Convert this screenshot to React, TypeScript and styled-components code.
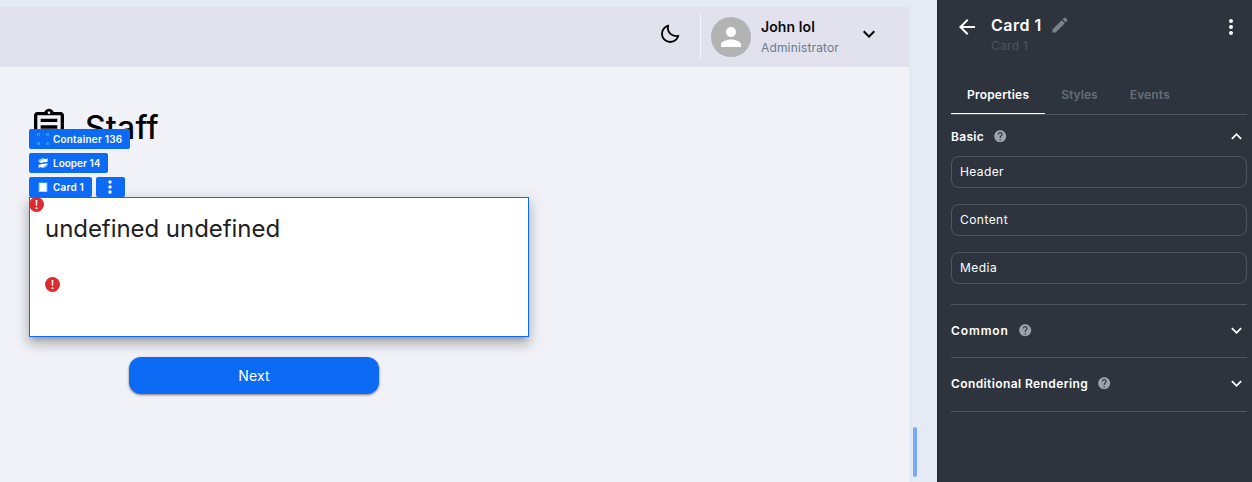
import React from "react";
import styled, { createGlobalStyle } from "styled-components";
import { BiMoon } from "react-icons/bi";
import {
  MdArrowBack,
  MdEdit,
  MdExpandLess,
  MdExpandMore,
  MdHelp,
  MdMoreVert,
  MdOutlineAssignment,
  MdPerson,
} from "react-icons/md";

const GlobalStyle = createGlobalStyle`
  *, *::before, *::after { box-sizing: border-box; }
  html, body { margin: 0; height: 100%; overflow: hidden; }
  body { font-family: Inter, "Liberation Sans", sans-serif; background: #e4ebf4; }
  h1, h2, p { margin: 0; }
  button { font: inherit; border: 0; background: none; padding: 0; color: inherit; }
  svg { display: block; flex: none; }
`;

const Shell = styled.div`
  display: flex;
  width: 1252px;
  height: 482px;
  overflow: hidden;
`;

const Workspace = styled.main`
  width: 909px;
  padding-top: 7px;
  display: flex;
  flex-direction: column;
`;

const TopBar = styled.header`
  height: 60px;
  flex: none;
  background: #e1e2ed;
  display: flex;
  align-items: center;
  justify-content: flex-end;
  padding-right: 28px;
`;

const ThemeToggle = styled.button`
  margin: -6px 19px 0 0;
`;

const User = styled.div`
  display: flex;
  align-items: center;
  height: 46px;
  border-left: 1px solid #f4f5fa;
  padding-left: 10px;
`;

const Avatar = styled.div`
  width: 40px;
  height: 40px;
  border-radius: 50%;
  background: #b3b3b3;
  color: #fff;
  display: grid;
  place-items: center;
`;

const UserText = styled.div`
  width: 96px;
  margin-left: 10px;
`;

const UserName = styled.p`
  font-size: 14px;
  font-weight: 600;
  line-height: 20px;
  letter-spacing: 0.1px;
  color: #0b0b0f;
  white-space: nowrap;
`;

const UserRole = styled.p`
  font-size: 12px;
  line-height: 22px;
  margin-bottom: -2px;
  letter-spacing: 0.15px;
  color: #6a7b8c;
`;

const UserCaret = styled.button`
  margin-top: -6px;
`;

const Page = styled.section`
  flex: 1;
  background: #f1f2f7;
  padding: 40px 29px 0;
`;

const Title = styled.h1`
  display: flex;
  align-items: center;
  gap: 16px;
  height: 40px;
  font-size: 32px;
  font-weight: 500;
  letter-spacing: 0.2px;
  color: #000;
`;

const Selected = styled.article`
  position: relative;
  margin-top: 50px;
  width: 500px;
  height: 140px;
  border: 1px solid #0d6af5;
  background: #fff;
  padding: 15px;
  box-shadow: 0 5px 5px -3px rgba(0, 0, 0, 0.2), 0 8px 10px 1px rgba(0, 0, 0, 0.14),
    0 3px 14px 2px rgba(0, 0, 0, 0.12);
`;

const CardTitle = styled.h2`
  font-size: 24px;
  font-weight: 400;
  line-height: 32px;
  letter-spacing: -0.05px;
  color: #212121;
  white-space: nowrap;
`;

const Alert = styled.span<{ $corner?: boolean }>`
  display: block;
  width: 15px;
  ${(p) => (p.$corner ? "position: absolute; left: -1px; top: -1px;" : "margin-top: 32px;")}
`;

const Tags = styled.div`
  position: absolute;
  left: -1px;
  bottom: 139px;
  display: flex;
  flex-direction: column;
  gap: 4px;
`;

const TagRow = styled.div`
  display: flex;
  gap: 4px;
`;

const Tag = styled.span<{ $w: number; $track?: number }>`
  width: ${(p) => p.$w}px;
  height: 20px;
  border-radius: 2px;
  background: #0d6af5;
  color: #fff;
  display: flex;
  align-items: center;
  gap: 4px;
  padding-left: 8px;
  font-size: 10px;
  font-weight: 600;
  letter-spacing: ${(p) => p.$track ?? 0}px;
  white-space: nowrap;
`;

const TagMenu = styled.button`
  width: 29px;
  height: 20px;
  border-radius: 2px;
  background: #0d6af5;
  color: #fff;
  display: grid;
  place-items: center;
  padding-right: 1px;
`;

const NextButton = styled.button`
  display: block;
  width: 250px;
  height: 37px;
  margin: 20px 0 0 100px;
  border-radius: 12px;
  background: #0d6af5;
  color: #fff;
  font-size: 14px;
  letter-spacing: 0.2px;
  box-shadow: 0 1px 3px rgba(0, 0, 0, 0.3), 0 1px 2px rgba(0, 0, 0, 0.25);
`;

const Gutter = styled.div`
  width: 28px;
  padding: 427px 0 0 4px;
`;

const ScrollThumb = styled.div`
  width: 4px;
  height: 50px;
  border-radius: 2px;
  background: #7aa9f3;
`;

const Panel = styled.aside`
  width: 315px;
  height: 482px;
  border-left: 2px solid #222a33;
  background: #2d343e;
  color: #fff;
  padding: 0 5px 0 12px;
`;

const PanelHead = styled.div`
  display: flex;
  height: 76px;
  padding: 15px 4px 0 4px;
`;

const PanelNames = styled.div`
  flex: 1;
  margin-left: 12px;
`;

const PanelTitle = styled.h2<{ $track: number }>`
  display: flex;
  align-items: center;
  gap: 8px;
  height: 19px;
  font-size: 16px;
  font-weight: 600;
  letter-spacing: ${(p) => p.$track}px;
  svg { color: #7c828a; }
`;

const PanelSub = styled.p`
  font-size: 12px;
  line-height: 16px;
  margin-top: 4px;
  letter-spacing: 0.3px;
  color: #4d545e;
`;

const Tabs = styled.nav`
  display: flex;
  height: 39px;
  border-bottom: 1px solid #50575f;
`;

const Tab = styled.button<{ $active?: boolean; $track: number }>`
  height: 38px;
  padding: 0 16px 2px;
  font-size: 12px;
  font-weight: 600;
  letter-spacing: ${(p) => p.$track}px;
  color: ${(p) => (p.$active ? "#fff" : "#676e77")};
  box-shadow: ${(p) => (p.$active ? "inset 0 -1px 0 #fff" : "none")};
`;

const SectionHead = styled.div<{ $h: number; $track: number; $top?: number; $bottom?: number }>`
  display: flex;
  align-items: center;
  height: ${(p) => p.$h}px;
  padding: ${(p) => p.$top ?? 0}px 0 ${(p) => p.$bottom ?? 0}px;
  font-size: 12px;
  font-weight: 600;
  letter-spacing: ${(p) => p.$track}px;
`;

const HelpIcon = styled(MdHelp)`
  margin: -1px auto 0 9px;
  color: #9ba4ae;
`;

const Slots = styled.div`
  display: flex;
  flex-direction: column;
  gap: 16px;
  padding: 0 0 20px;
`;

const Slot = styled.div<{ $track: number }>`
  height: 32px;
  border: 1px solid #50575f;
  border-radius: 8px;
  padding-left: 8px;
  font-size: 12px;
  line-height: 30px;
  letter-spacing: ${(p) => p.$track}px;
`;

const Section = styled.section`
  border-bottom: 1px solid #50575f;
`;

const AlertGlyph = () => (
  <svg width="15" height="15" viewBox="0 0 15 15">
    <circle cx="7.5" cy="7.5" r="7.5" fill="#dc2c2f" />
    <path d="M6.6 3h1.8l-.3 6H6.9zM6.6 10.2h1.8v1.7H6.6z" fill="#fff" />
  </svg>
);

const ContainerGlyph = () => (
  <svg width="12" height="12" viewBox="0 0 12 12" fill="#189cf4">
    <path d="M0 0h3v3H0zM9 0h3v3H9zM0 9h3v3H0zM9 9h3v3H9z" />
    <path d="M5 1h2v1H5zM5 10h2v1H5zM1 5h1v2H1zM10 5h1v2h-1z" opacity=".35" />
  </svg>
);

const LooperGlyph = () => (
  <svg width="12" height="12" viewBox="0 0 12 12">
    <path d="M1.5 4.6C2 1.5 6 .6 8.7 2.2L10.6 1.2V4.8L4 6.2z" fill="#fff" />
    <path d="M10.6 6.6C10.2 10.5 5.8 11.6 3.2 10L1.6 11V7.8L8 6.4z" fill="#fff" />
    <path d="M1.3 5C1.8 1.8 5 .9 7.5 1.6L3 4.2zM10.7 7C10.2 10 7 11.2 4.5 10.7L9 8z" fill="#78c9f7" />
    <path d="M1.6 6.7L10.5 5.3" stroke="#0d6af5" strokeWidth="0.9" />
  </svg>
);

const CardGlyph = () => (
  <svg width="12" height="12" viewBox="0 0 12 12">
    <rect x="1.5" y="1.5" width="9" height="9.5" fill="#4fc0f5" />
    <rect x="2.5" y="2" width="7" height="8.5" fill="#fff" />
  </svg>
);

export default function App() {
  return (
    <>
      <GlobalStyle />
      <Shell>
        <Workspace>
          <TopBar>
            <ThemeToggle aria-label="Toggle theme"><BiMoon size={22} /></ThemeToggle>
            <User>
              <Avatar><MdPerson size={30} /></Avatar>
              <UserText>
                <UserName>John lol</UserName>
                <UserRole>Administrator</UserRole>
              </UserText>
              <UserCaret aria-label="Account menu"><MdExpandMore size={24} /></UserCaret>
            </User>
          </TopBar>
          <Page>
            <Title><MdOutlineAssignment size={40} />Staff</Title>
            <Selected>
              <Alert $corner><AlertGlyph /></Alert>
              <CardTitle>undefined undefined</CardTitle>
              <Alert><AlertGlyph /></Alert>
              <Tags>
                <Tag $w={101} $track={0.17}><ContainerGlyph />Container 136</Tag>
                <Tag $w={79}><LooperGlyph />Looper 14</Tag>
                <TagRow>
                  <Tag $w={63} $track={0.2}><CardGlyph />Card 1</Tag>
                  <TagMenu aria-label="More"><MdMoreVert size={20} /></TagMenu>
                </TagRow>
              </Tags>
            </Selected>
            <NextButton>Next</NextButton>
          </Page>
        </Workspace>
        <Gutter><ScrollThumb /></Gutter>
        <Panel>
          <PanelHead>
            <MdArrowBack size={24} />
            <PanelNames>
              <PanelTitle $track={0.5}>Card 1<MdEdit size={20} /></PanelTitle>
              <PanelSub>Card 1</PanelSub>
            </PanelNames>
            <MdMoreVert size={24} />
          </PanelHead>
          <Tabs>
            <Tab $active $track={0.2}>Properties</Tab>
            <Tab $track={0.05}>Styles</Tab>
            <Tab $track={0.15}>Events</Tab>
          </Tabs>
          <Section>
            <SectionHead $h={41} $top={2} $track={0.3}>Basic<HelpIcon size={14.4} /><MdExpandLess size={21} /></SectionHead>
            <Slots>
              <Slot $track={0.4}>Header</Slot>
              <Slot $track={0.45}>Content</Slot>
              <Slot $track={0.45}>Media</Slot>
            </Slots>
          </Section>
          <Section>
            <SectionHead $h={52} $bottom={1} $track={0.9}>Common<HelpIcon size={14.4} /><MdExpandMore size={21} /></SectionHead>
          </Section>
          <Section>
            <SectionHead $h={53} $bottom={2} $track={0.4}>Conditional Rendering<HelpIcon size={14.4} /><MdExpandMore size={21} /></SectionHead>
          </Section>
        </Panel>
      </Shell>
    </>
  );
}
